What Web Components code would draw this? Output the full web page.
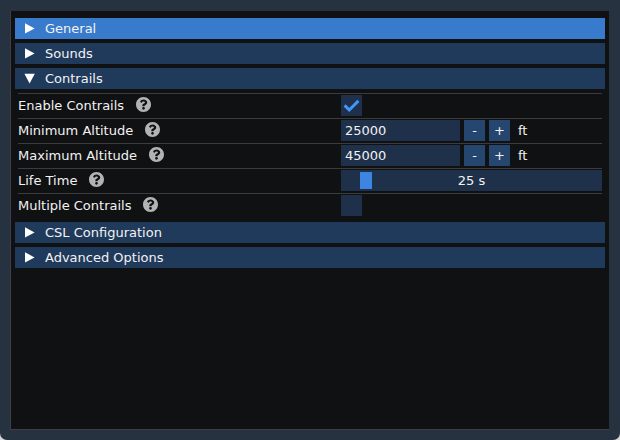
<!DOCTYPE html>
<html lang="en">
<head>
<meta charset="utf-8">
<title>Settings</title>
<style>
html { background: #d8d8d6; }
body { margin: 0; font: 13px/21px "DejaVu Sans", Verdana, sans-serif; color: #f2f2f2; }
</style>
</head>
<body>
<settings-window>
  <settings-section label="General" active></settings-section>
  <settings-section label="Sounds"></settings-section>
  <settings-section label="Contrails" open>
    <setting-row label="Enable Contrails"><check-field label="Enable Contrails" checked></check-field></setting-row>
    <setting-row label="Minimum Altitude"><number-field label="Minimum Altitude" value="25000" step="1000" unit="ft"></number-field></setting-row>
    <setting-row label="Maximum Altitude"><number-field label="Maximum Altitude" value="45000" step="1000" unit="ft"></number-field></setting-row>
    <setting-row label="Life Time"><slider-field label="Life Time" min="5" max="300" value="25" unit="s"></slider-field></setting-row>
    <setting-row label="Multiple Contrails"><check-field label="Multiple Contrails"></check-field></setting-row>
  </settings-section>
  <settings-section label="CSL Configuration"></settings-section>
  <settings-section label="Advanced Options"></settings-section>
</settings-window>

<script>
class BaseElement extends HTMLElement {
  render(html) {
    this.attachShadow({ mode: "open" }).innerHTML =
      "<style>*{box-sizing:border-box}button,input{font:inherit;color:inherit;border:0;border-radius:0;margin:0;padding:0}</style>" + html;
  }
  find(selector) { return this.shadowRoot.querySelector(selector); }
  get label() { return this.getAttribute("label"); }
}

customElements.define("settings-window", class extends BaseElement {
  constructor() {
    super();
    this.render(`
      <style>
        :host { display: flex; box-sizing: border-box; min-height: 100vh; padding: 11px 11px 10px 10px;
          background: #26323f; border-radius: 0 0 7px 7px; }
        main { flex: 1; min-width: 0; display: flex; flex-direction: column; gap: 4px; padding: 7px 4px;
          background: #101113; border: solid #3f3f48; border-width: 0 0 1px 1px; }
      </style>
      <main><slot></slot></main>`);
  }
});

customElements.define("settings-section", class extends BaseElement {
  connectedCallback() {
    if (this.shadowRoot) return;
    this.render(`
      <style>
        :host { display: block; }
        button { display: flex; align-items: center; width: 100%; height: 21px; gap: 8px; padding: 0 9px;
          background: #203a5c; text-align: left; }
        :host([active]) button { background: #387bcd; }
        svg { width: 13px; height: 13px; flex: none; fill: #fff; }
        .down, :host([open]) .right { display: none; }
        :host([open]) .down { display: inline; }
        .body { display: none; padding: 4px 3px 0; }
        :host([open]) .body { display: block; }
      </style>
      <button type="button" aria-expanded="${this.hasAttribute("open")}">
        <svg viewBox="0 0 13 13" aria-hidden="true"><path class="right" d="M1 1.2L10.6 6.4L1 11.6Z"/><path class="down" d="M.4 1.8H10.8L5.6 11.4Z"/></svg>
        <span>${this.label}</span>
      </button>
      <div class="body"><slot></slot></div>`);
    this.find("button").addEventListener("click", () => {
      this.toggleAttribute("open");
      this.find("button").setAttribute("aria-expanded", this.hasAttribute("open"));
    });
  }
});

customElements.define("setting-row", class extends BaseElement {
  connectedCallback() {
    if (this.shadowRoot) return;
    this.render(`
      <style>
        :host { display: grid; grid-template-columns: 323fr 261fr; align-items: center;
          border-top: 1px solid #3c3c3e; padding: 1px 0 2px; }
        .name { display: flex; gap: 12px; }
        svg { width: 15px; height: 15px; margin-top: 2px; fill: #b3b3b3; }
      </style>
      <div class="name"><span>${this.label}</span>
        <svg viewBox="8 8 496 496" role="img" aria-label="Help"><path d="M504 256c0 136.997-111.043 248-248 248S8 392.997 8 256C8 119.083 119.043 8 256 8s248 111.083 248 248zM262.655 90c-54.497 0-89.255 22.957-116.549 63.758-3.536 5.286-2.353 12.415 2.715 16.258l34.699 26.31c5.205 3.947 12.621 3.008 16.665-2.122 17.864-22.658 30.113-35.797 57.303-35.797 20.429 0 45.698 13.148 45.698 32.958 0 14.976-12.363 22.667-32.534 33.976C247.128 238.528 216 254.941 216 296v4c0 6.627 5.373 12 12 12h56c6.627 0 12-5.373 12-12v-1.333c0-28.462 83.186-29.647 83.186-106.667 0-58.002-60.165-102-116.531-102zM256 338c-25.365 0-46 20.635-46 46 0 25.364 20.635 46 46 46s46-20.636 46-46c0-25.364-20.635-46-46-46z"/></svg>
      </div>
      <slot></slot>`);
  }
});

customElements.define("check-field", class extends BaseElement {
  connectedCallback() {
    if (this.shadowRoot) return;
    this.render(`
      <style>
        :host { display: grid; grid-template: 21px / 21px; }
        input, svg { grid-area: 1 / 1; width: 21px; height: 21px; }
        input { appearance: none; background: #1f304a; }
        svg { visibility: hidden; pointer-events: none; fill: none; stroke: #4296fa; stroke-width: 3; }
        input:checked + svg { visibility: visible; }
      </style>
      <input type="checkbox" aria-label="${this.label}" ${this.hasAttribute("checked") ? "checked" : ""}>
      <svg viewBox="0 0 21 21" aria-hidden="true"><path d="M3.6 10.4L8.25 15L17.4 5.9"/></svg>`);
  }
});

customElements.define("number-field", class extends BaseElement {
  connectedCallback() {
    if (this.shadowRoot) return;
    this.render(`
      <style>
        :host { display: flex; gap: 4px; }
        input { width: 119px; height: 21px; padding: 0 4px; background: #1f304a; }
        button { width: 21px; height: 21px; background: #25466e; text-align: center; }
        span { padding-left: 4px; }
      </style>
      <input type="text" inputmode="numeric" aria-label="${this.label}" value="${this.getAttribute("value")}">
      <button type="button" aria-label="Decrease ${this.label}">-</button>
      <button type="button" aria-label="Increase ${this.label}">+</button>
      <span>${this.getAttribute("unit")}</span>`);
    const input = this.find("input");
    this.shadowRoot.querySelectorAll("button").forEach((button, i) =>
      button.addEventListener("click", () => {
        input.value = Number(input.value) + (i ? 1 : -1) * Number(this.getAttribute("step"));
      }));
  }
});

customElements.define("slider-field", class extends BaseElement {
  connectedCallback() {
    if (this.shadowRoot) return;
    const unit = this.getAttribute("unit");
    const value = this.getAttribute("value");
    this.render(`
      <style>
        :host { display: grid; grid-template: 21px / 1fr; }
        input, output { grid-area: 1 / 1; min-width: 0; }
        input { appearance: none; width: 100%; height: 21px; padding: 2px; background: #1f304a; }
        input::-webkit-slider-thumb { appearance: none; width: 12px; height: 17px; background: #3d85e0; }
        input::-moz-range-thumb { width: 12px; height: 17px; border: 0; border-radius: 0; background: #3d85e0; }
        output { text-align: center; pointer-events: none; }
      </style>
      <input id="range" type="range" aria-label="${this.label}" min="${this.getAttribute("min")}" max="${this.getAttribute("max")}" value="${value}">
      <output for="range">${value} ${unit}</output>`);
    this.find("input").addEventListener("input", e => {
      this.find("output").textContent = `${e.target.value} ${unit}`;
    });
  }
});
</script>
</body>
</html>
